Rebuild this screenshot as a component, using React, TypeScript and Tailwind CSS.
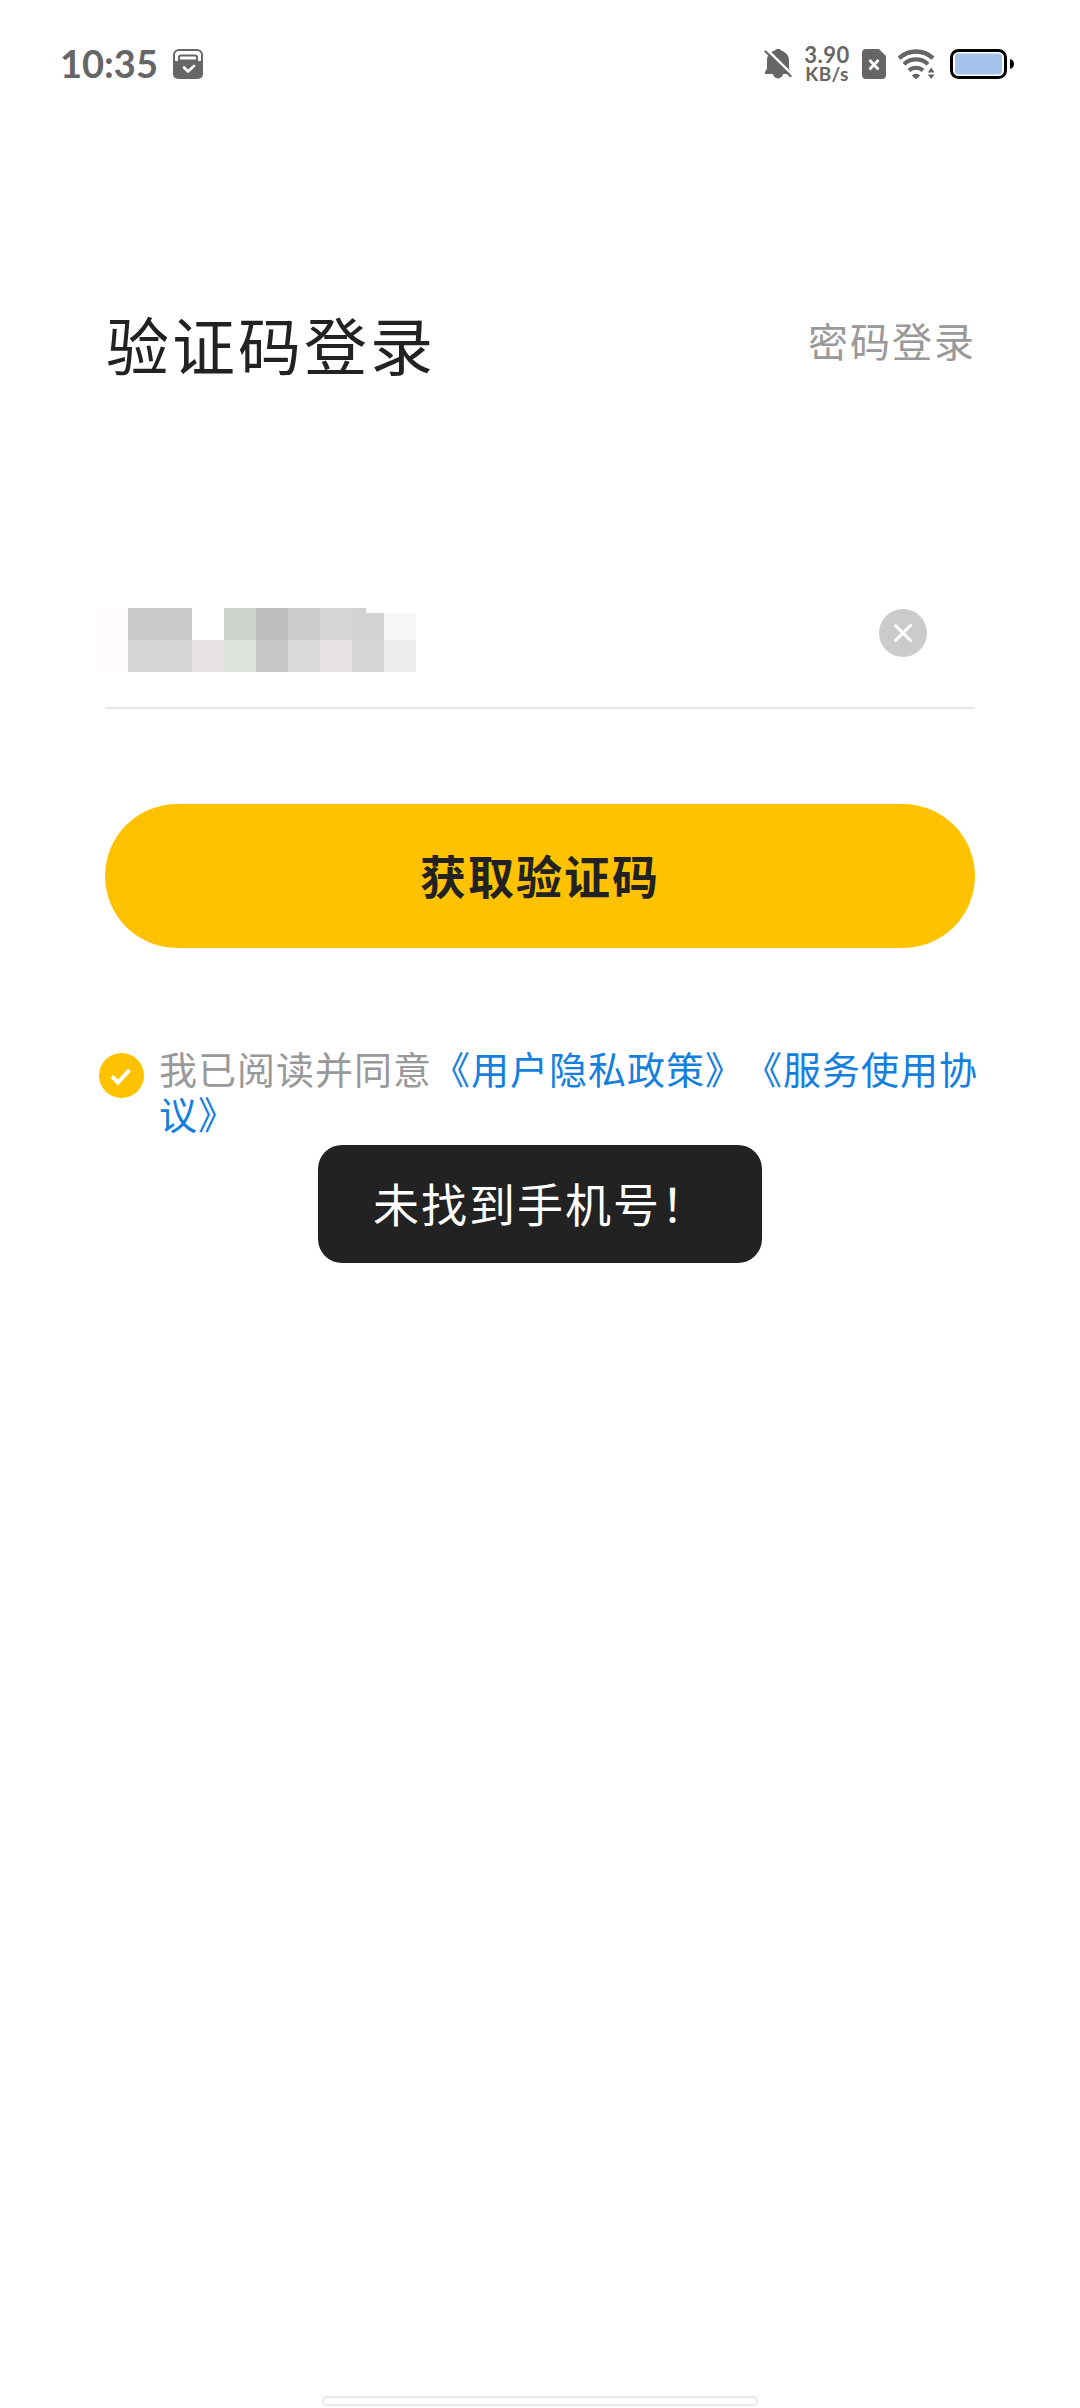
import React, { useState } from 'react';

// 已打码的手机号，每格 32px
const maskRows = [
    ['bg-[#fffbff]', 'bg-[#cbc9cc]', 'bg-[#cbc9cc]', 'bg-white', 'bg-[#cdd2cb]', 'bg-[#bdbdbd]', 'bg-[#cdcdcd]', 'bg-[#d5d5d5]', 'bg-[#d3d1d4]', 'bg-[#f7f7f7]'],
    ['bg-[#fffbff]', 'bg-[#d6d6d6]', 'bg-[#d6d6d6]', 'bg-[#e6e1e5]', 'bg-[#dde2dc]', 'bg-[#c6c6c6]', 'bg-[#dcdadd]', 'bg-[#e6e1e5]', 'bg-[#d6d6d6]', 'bg-[#eeeeee]'],
];

const StatusBar: React.FC = () => (
    <div className="h-32 pl-[60px] pr-16 flex items-start justify-between text-[#666666]">
        <div className="flex items-start pt-[49px]">
            <span className="w-[112px] h-[30px] leading-[28px] text-[38px] font-bold whitespace-nowrap font-['Lato','Noto_Sans',sans-serif]">10:35</span>
            <svg className="w-8 h-[30px]" viewBox="0 0 32 30" fill="none">
                <path d="M2 13V6a5 5 0 0 1 5-5h18a5 5 0 0 1 5 5v7" stroke="currentColor" strokeWidth="2" />
                <path d="M7 13V8.5a2 2 0 0 1 2-2h14a2 2 0 0 1 2 2V13" stroke="currentColor" strokeWidth="2" />
                <path d="M1 12h7v-1.5h16V12h7v13a5 5 0 0 1-5 5H6a5 5 0 0 1-5-5z" fill="currentColor" />
                <path d="m12 18.5 4 4 6-5.5" stroke="white" strokeWidth="2.6" strokeLinecap="round" strokeLinejoin="round" />
            </svg>
        </div>
        <div className="flex items-start pt-[49px]">
            <svg className="w-7 h-[30px] mr-3 -ml-0.5 -translate-x-0.5" viewBox="0 0 28 30" fill="none">
                <path d="M14 0c1.800 0 2.800.7 3.200 1.600C21.500 3 25 6.500 25 11v7.500c0 1.500 1 3 1.800 4.500v2H1v-2c.8-1.500 2-3 2-4.500V11c0-4.500 3.500-8 7.800-9.400C11.200.7 12.200 0 14 0z" fill="currentColor" />
                <path d="M9 24.500h10a5 5 0 0 1-10 0z" fill="currentColor" />
                <path d="M2.300 0 30 27.200" stroke="white" strokeWidth="2.600" />
                <path d="M.8 1.800 27.200 27.800" stroke="currentColor" strokeWidth="2.200" />
            </svg>
            <div className="w-[46px] -mt-[4px] mr-3 -ml-0.5 flex flex-col items-center font-bold whitespace-nowrap font-['Lato','Noto_Sans',sans-serif]">
                <span className="h-[19px] leading-[20px] text-[22px] tracking-[0.5px]">3.90</span>
                <span className="h-[19px] leading-[19px] text-[19px] tracking-[0.4px]">KB/s</span>
            </div>
            <svg className="w-6 h-[30px] mr-3" viewBox="0 0 24 30" fill="none">
                <path d="M4 0h13l7 7v19a4 4 0 0 1-4 4H4a4 4 0 0 1-4-4V4a4 4 0 0 1 4-4z" fill="currentColor" />
                <path d="m7.500 11 9 9.500m0-9.500-9 9.500" stroke="white" strokeWidth="2.800" />
            </svg>
            <svg className="w-[38px] h-[30px] mr-4" viewBox="0 0 38 30" fill="none">
                <path d="M1 9.200a25 25 0 0 1 34 0" stroke="currentColor" strokeWidth="4.400" />
                <path d="M6 15.200a17.500 17.500 0 0 1 24 0" stroke="currentColor" strokeWidth="4.200" />
                <path d="M11 21.500a10.200 10.200 0 0 1 14 0" stroke="currentColor" strokeWidth="4" />
                <path d="M13.800 26.400c2.600-2.200 5.800-2.200 8.400 0L18 30.500z" fill="currentColor" />
                <path d="M29.800 23.500 33.200 18.500l3.400 5zM29.800 25.500h6.800l-3.400 4.500z" fill="currentColor" />
            </svg>
            <svg className="w-16 h-[30px] -ml-0.5 mr-0.5" viewBox="0 0 64 30" fill="none">
                <rect x="1.500" y="1.500" width="54" height="27" rx="7" stroke="black" strokeWidth="3" />
                <rect x="5" y="4.500" width="47" height="21" rx="3.500" fill="#a5c3ea" />
                <path d="M60 10c2.500.5 4 2.500 4 5s-1.500 4.500-4 5z" fill="black" />
            </svg>
        </div>
    </div>
);

const App: React.FC = () => {
    const [agreed, setAgreed] = useState(true);

    return (
        <div className="relative w-[1080px] h-[2408px] bg-white overflow-hidden flex flex-col text-[#222222] font-['Noto_Sans_CJK_SC',sans-serif]">
            <StatusBar />

            {/* 标题 */}
            <div className="mt-[168px] h-24 pl-[106px] pr-[104px] flex items-start justify-between whitespace-nowrap">
                <h1 className="text-[63px] leading-[94px] tracking-[3px]">验证码登录</h1>
                <button className="text-[40px] leading-[88px] tracking-[2px] text-[#999999]">密码登录</button>
            </div>

            {/* 手机号 */}
            <div className="mt-[216px] ml-24 mr-[105px] h-16 flex items-start justify-between">
                <div className="relative">
                    {maskRows.map((row, i) => (
                        <div key={i} className="flex">
                            {row.map((color, j) => (
                                <div key={j} className={`w-8 h-8 ${color}`} />
                            ))}
                        </div>
                    ))}
                    <div className="absolute top-0 right-0 w-[50px] h-[5px] bg-white" />
                </div>
                <button className="mt-px mr-12">
                    <svg className="w-12 h-12" viewBox="0 0 48 48" fill="none">
                        <circle cx="24" cy="24" r="24" fill="#cbcbcb" />
                        <path d="m16.500 16.500 15 15m0-15-15 15" stroke="white" strokeWidth="3" strokeLinecap="round" />
                    </svg>
                </button>
            </div>
            <div className="mt-[35px] mx-[105px] h-[2px] bg-[#e6e6e6]" />

            <button className="mt-[95px] mx-[105px] h-36 rounded-full bg-[#ffc200] text-[46px] leading-[140px] pb-1 font-bold tracking-[2px]">
                获取验证码
            </button>

            {/* 用户协议 */}
            <div className="mt-[97px] pl-[99px] flex items-start">
                <button className="mt-2 mr-[15px]" onClick={() => setAgreed(!agreed)}>
                    <svg className="w-[45px] h-[45px]" viewBox="0 0 45 45" fill="none">
                        <circle cx="22.500" cy="22.500" r="22.500" fill={agreed ? '#ffc200' : '#cbcbcb'} />
                        <path d="m13 23.500 6 6 11.500-12.500" stroke="white" strokeWidth="4" />
                    </svg>
                </button>
                <p className="w-[825px] text-[38px] leading-[45px] tracking-[1px] text-[#999999] break-all [text-spacing-trim:space-all] [line-break:anywhere]">
                    我已阅读并同意<span className="text-[#147fdf]">《用户隐私政策》《服务使用协议》</span>
                </p>
            </div>

            {/* 提示 */}
            <div className="absolute left-[318px] top-[1145px] w-[444px] h-[118px] rounded-3xl bg-[#222222] pl-[55px] text-white text-[46px] leading-[114px] tracking-[2px] whitespace-nowrap">
                未找到手机号！
            </div>

            <div className="mt-auto mb-[2px] mx-auto w-[436px] h-[10px] rounded-full border-2 border-[#e9e9e9]" />
        </div>
    );
};

export default App;
